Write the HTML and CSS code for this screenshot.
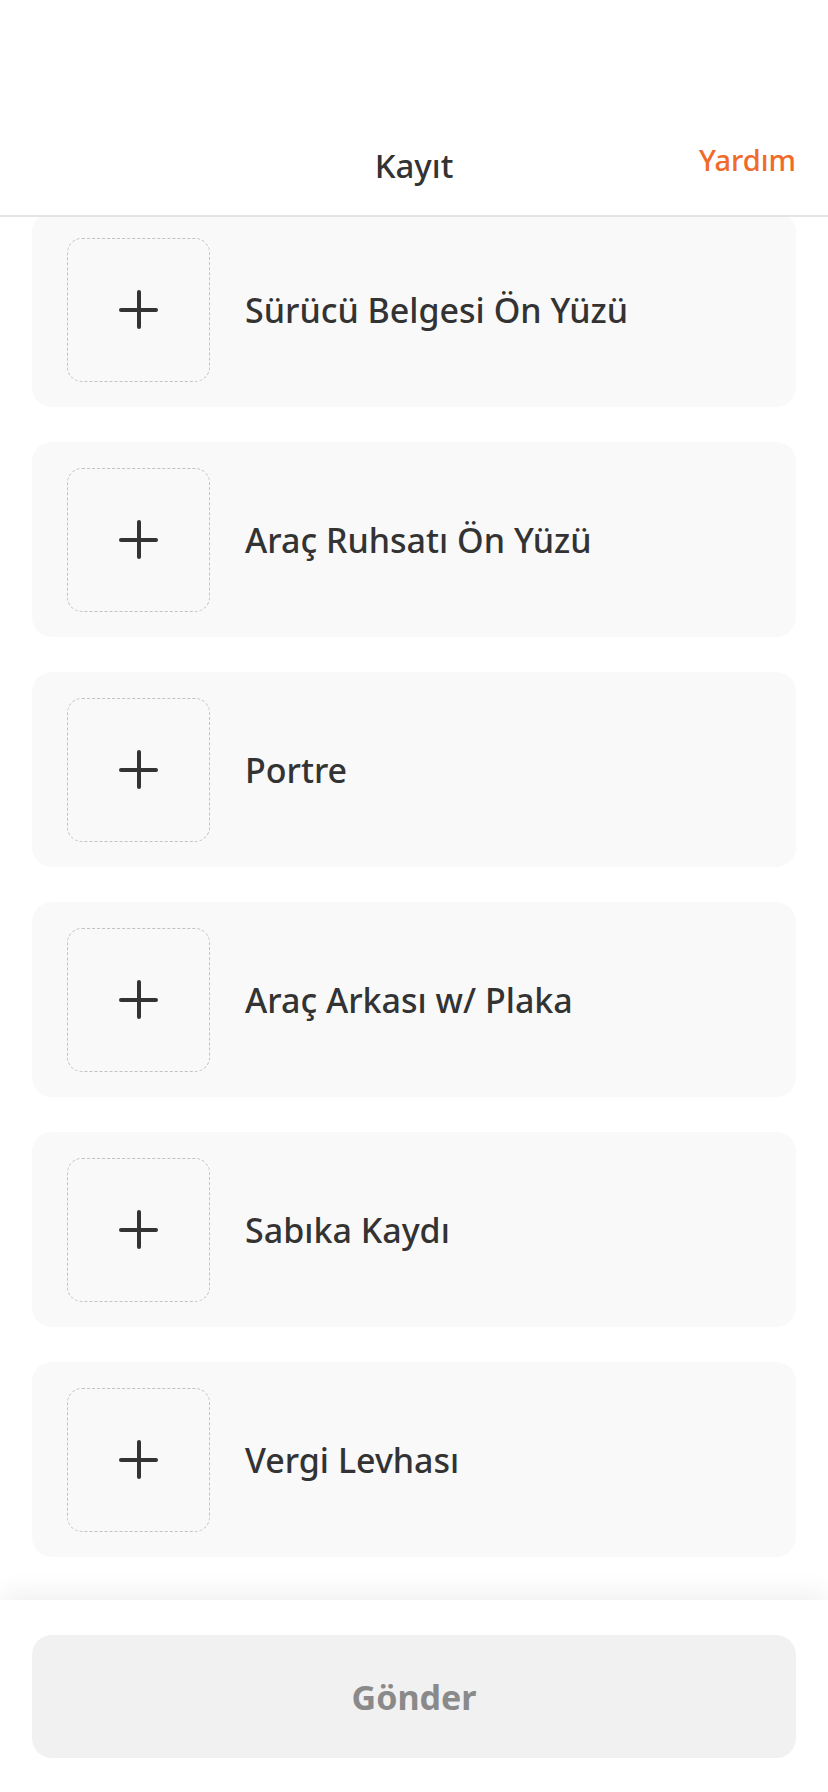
FILE: index.html
```html
<!DOCTYPE html>
<html>

<head lang="tr">
    <meta charset="UTF-8">
    <title>Kayıt</title>
    <link rel="stylesheet" href="styles.css">
</head>

<body>
    <!-- 顶部导航 固定在上面 盖住列表 -->
    <div class="top-bar">
        <h1 class="title">Kayıt</h1>
        <a href="#" class="help">Yardım</a>
    </div>

    <ul class="doc-list">
        <li class="doc">
            <span class="upload"><i class="plus"></i></span>
            <span class="name">Sürücü Belgesi Ön Yüzü</span>
        </li>
        <li class="doc">
            <span class="upload"><i class="plus"></i></span>
            <span class="name">Araç Ruhsatı Ön Yüzü</span>
        </li>
        <li class="doc">
            <span class="upload"><i class="plus"></i></span>
            <span class="name">Portre</span>
        </li>
        <li class="doc">
            <span class="upload"><i class="plus"></i></span>
            <span class="name">Araç Arkası w/ Plaka</span>
        </li>
        <li class="doc">
            <span class="upload"><i class="plus"></i></span>
            <span class="name">Sabıka Kaydı</span>
        </li>
        <li class="doc">
            <span class="upload"><i class="plus"></i></span>
            <span class="name">Vergi Levhası</span>
        </li>
    </ul>

    <div class="footer">
        <button class="submit" disabled>Gönder</button>
    </div>
</body>

</html>
```

FILE: styles.css
```css
* {
    margin: 0;
    padding: 0;
    box-sizing: border-box;
}

ul {
    list-style: none;
}

html,
body {
    height: 100%;
}

body {
    display: flex;
    flex-direction: column;
    background-color: #fff;
    font-family: "Noto Sans", "Open Sans", sans-serif;
    color: #333;
    overflow: hidden;
}

.top-bar {
    position: fixed;
    left: 0;
    top: 0;
    width: 100%;
    height: 217px;
    padding: 0 32px;
    display: flex;
    align-items: flex-end;
    justify-content: center;
    background-color: #fff;
    border-bottom: 2px solid #e4e4e4;
    z-index: 2;
}

.title {
    font-size: 33px;
    font-weight: 500;
    line-height: 44px;
    margin-bottom: 27px;
    color: #333;
}

.help {
    position: absolute;
    right: 32px;
    bottom: 35px;
    font-size: 29px;
    font-weight: 500;
    line-height: 40px;
    color: #f06a2a;
    text-decoration: none;
}

.doc-list {
    flex: 1;
    padding: 212px 32px 0;
    display: flex;
    flex-direction: column;
    gap: 35px;
}

.doc {
    height: 195px;
    padding: 0 35px;
    display: flex;
    align-items: center;
    gap: 35px;
    background-color: #f9f9f9;
    border-radius: 20px;
}

.upload {
    width: 143px;
    height: 144px;
    flex-shrink: 0;
    display: flex;
    align-items: center;
    justify-content: center;
    border: 1.5px dashed #c2c2c2;
    border-radius: 15px;
}

.plus {
    position: relative;
    width: 39px;
    height: 39px;
}

.plus::before,
.plus::after {
    content: "";
    position: absolute;
    background-color: #333;
    border-radius: 2px;
}

.plus::before {
    left: 0;
    top: 17.5px;
    width: 39px;
    height: 4px;
}

.plus::after {
    left: 17.5px;
    top: 0;
    width: 4px;
    height: 39px;
}

.name {
    font-size: 34px;
    font-weight: 500;
    color: #333;
}

.footer {
    position: fixed;
    left: 0;
    bottom: 0;
    width: 100%;
    height: 192px;
    padding: 35px 32px 34px;
    background-color: #fff;
    box-shadow: 0 -8px 24px rgba(0, 0, 0, 0.06);
    z-index: 2;
}

.submit {
    width: 100%;
    height: 123px;
    border: none;
    border-radius: 20px;
    background-color: #f1f1f1;
    font-family: "Noto Sans", "Open Sans", sans-serif;
    font-size: 34px;
    font-weight: 700;
    color: #8a8a8a;
}
```
